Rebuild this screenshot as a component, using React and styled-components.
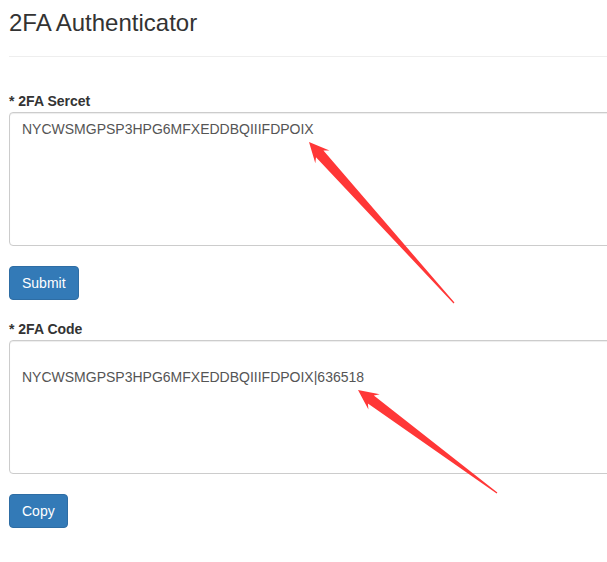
import styled, { createGlobalStyle } from 'styled-components'

const GlobalStyle = createGlobalStyle`
  html, body {
    margin: 0;
    background: #fff;
  }
  body {
    font-family: "Liberation Sans", Arial, sans-serif;
    font-size: 14px;
    line-height: 1.42857;
    color: #333;
  }
`

const SECRET = 'NYCWSMGPSP3HPG6MFXEDDBQIIIFDPOIX'
const CODE = '636518'

const arrows = [
  { tip: [309, 142], tail: [454, 303] },
  { tip: [358, 390], tail: [497, 493] },
]

// tapered red annotation arrow, computed from tip -> tail
const arrowPoints = ({ tip, tail }) => {
   const dx = tail[0] - tip[0]
   const dy = tail[1] - tip[1]
   const len = Math.hypot(dx, dy)
   const ux = dx / len
   const uy = dy / len
   const nx = -uy
   const ny = ux
   const at = (d, w) => [tip[0] + ux * d + nx * w, tip[1] + uy * d + ny * w]
   const pts = [
      tip,
      at(20, 9.5),
      at(16, 5),
      at(len, 0.6),
      at(len, -0.6),
      at(16, -5),
      at(20, -9.5),
   ]
   return pts.map(p => p.join(',')).join(' ')
}

const App = () => {
   return (
      <>
         <GlobalStyle />
         <Page>
            <Title>2FA Authenticator</Title>
            <Form onSubmit={e => e.preventDefault()}>
               <Group>
                  <Label htmlFor="secret">* 2FA Sercet</Label>
                  <TextArea id="secret" rows={6} defaultValue={SECRET} />
               </Group>
               <Group $tight>
                  <Button type="submit">Submit</Button>
               </Group>
               <Group>
                  <Label htmlFor="code">* 2FA Code</Label>
                  <TextArea id="code" rows={6} defaultValue={`\n${SECRET}|${CODE}`} />
               </Group>
               <Group>
                  <Button type="button">Copy</Button>
               </Group>
            </Form>
            <Overlay width="607" height="562" viewBox="0 0 607 562">
               {arrows.map((a, i) => (
                  <polygon key={i} points={arrowPoints(a)} fill="#ff3737" />
               ))}
            </Overlay>
         </Page>
      </>
   )
}

export default App

const Page = styled.div`
  position: relative;
  width: 607px;
  height: 562px;
  overflow: hidden;
  padding-left: 9px;
  box-sizing: border-box;
`

const Title = styled.h1`
  margin: 10px 0 0;
  padding-bottom: 20px;
  border-bottom: 1px solid #eee;
  font-size: 24px;
  font-weight: 500;
  line-height: 26px;
  color: #333;
`

const Form = styled.form`
  margin-top: 30px;
`

const Group = styled.div`
  margin-bottom: ${p => (p.$tight ? 15 : 20)}px;
`

const Label = styled.label`
  display: block;
  padding-top: 4px;
  margin-bottom: 1px;
  font-weight: bold;
  line-height: 20px;
`

const TextArea = styled.textarea`
  display: block;
  box-sizing: border-box;
  width: 640px;
  height: 134px;
  padding: 6px 12px;
  font-family: inherit;
  font-size: 14px;
  line-height: 20px;
  color: #555;
  background: #fff;
  border: 1px solid #ccc;
  border-radius: 4px;
  box-shadow: inset 0 1px 1px rgba(0, 0, 0, 0.075);
  resize: vertical;
  outline: none;
`

const Button = styled.button`
  display: inline-block;
  box-sizing: border-box;
  height: 34px;
  padding: 6px 12px;
  font-family: inherit;
  font-size: 14px;
  line-height: 20px;
  color: #fff;
  background: #337ab7;
  border: 1px solid #2e6da4;
  border-radius: 4px;
  cursor: pointer;
`

const Overlay = styled.svg`
  position: absolute;
  top: 0;
  left: 0;
  pointer-events: none;
`
